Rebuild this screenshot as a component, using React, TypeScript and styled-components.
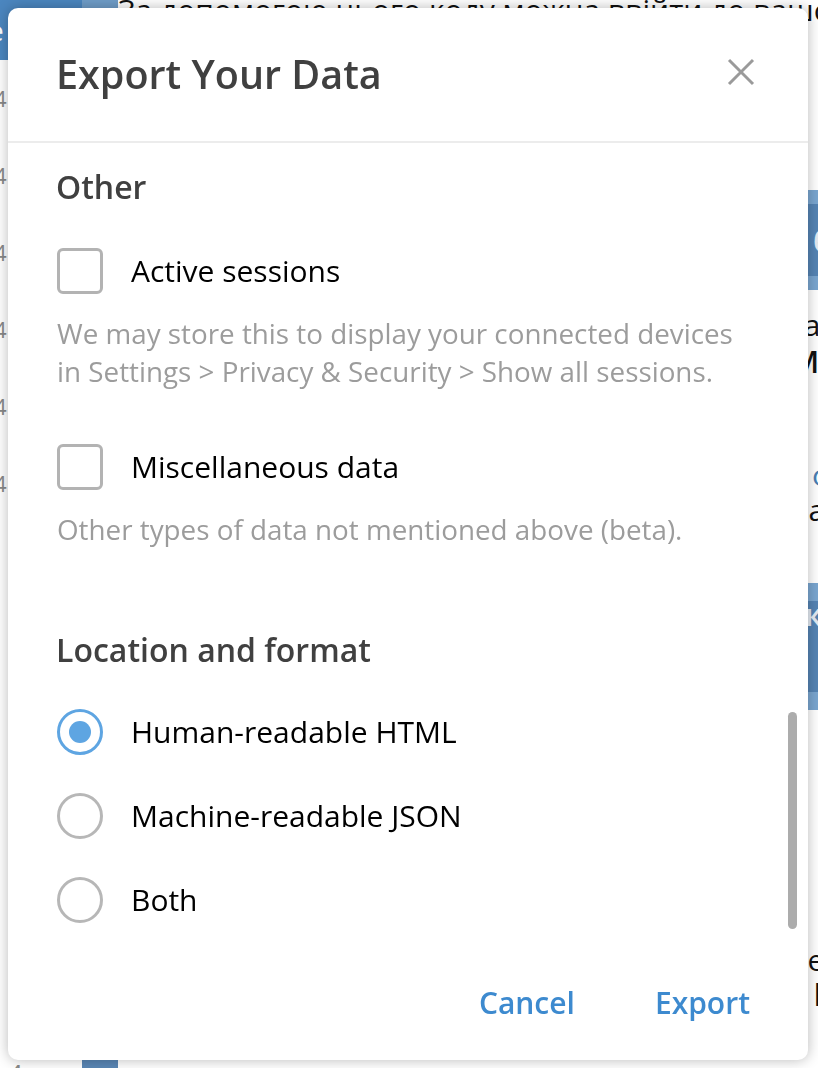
import styled, { createGlobalStyle } from 'styled-components';

const GlobalStyle = createGlobalStyle`
  html, body {
    margin: 0;
    padding: 0;
    background: #ffffff;
    overflow: hidden;
  }
  body {
    font-family: "Open Sans", "Noto Sans", sans-serif;
  }
`

const Backdrop = styled.div`
  width: 818px;
  height: 1068px;
  display: flex;
  overflow: hidden;
  background: #ffffff;
`

const Sidebar = styled.div`
  width: 118px;
  flex-shrink: 0;
  display: flex;
  flex-direction: column;
`

const SideTop = styled.div`
  height: 60px;
  display: flex;
`

const SideActive = styled.div`
  width: 82px;
  background: #4b86bf;
  color: #fff;
  font-size: 28px;
  line-height: 60px;
  overflow: hidden;
  text-indent: -12px;
`

const SideLight = styled.div`
  flex: 1;
  background: #6f9dc8;
`

const SideItem = styled.div`
  height: 77px;
  font-size: 22px;
  color: #888;
  line-height: 77px;
  text-indent: -6px;
  &:first-of-type {
    margin-top: 108px;
  }
`

const SideBottom = styled.div`
  margin-top: auto;
  display: flex;
  height: 8px;
  align-items: flex-start;
  overflow: hidden;
`

const SideBottomText = styled.div`
  width: 82px;
  font-size: 26px;
  color: #888;
  line-height: 26px;
  padding-left: 8px;
  box-sizing: border-box;
`

const SideBottomBlue = styled.div`
  flex: 1;
  height: 8px;
  background: #5a87b5;
`

const Chat = styled.div`
  flex: 1;
  display: flex;
  flex-direction: column;
`

const ChatLine = styled.div<{ $top: number; $bold?: boolean; $color?: string; $shift?: number }>`
  height: 36px;
  line-height: 36px;
  margin-top: ${(p) => p.$top}px;
  margin-right: ${(p) => -(p.$shift ?? 14)}px;
  font-size: 30px;
  font-weight: ${(p) => (p.$bold ? 600 : 400)};
  color: ${(p) => p.$color || '#111'};
  text-align: right;
  white-space: nowrap;
  overflow: hidden;
`

const ChatBlock = styled.div<{ $top: number; $h: number }>`
  height: ${(p) => p.$h}px;
  margin-top: ${(p) => p.$top}px;
  background: linear-gradient(#7aa6d0 0 14%, #5584b4 14% 86%, #7aa6d0 86%);
  color: rgba(255, 255, 255, 0.85);
  font-size: 30px;
  font-weight: 600;
  text-align: right;
  display: flex;
  flex-direction: column;
  justify-content: space-around;
  margin-right: -14px;
`

const Overlay = styled.div`
  position: fixed;
  inset: 0;
`

const Modal = styled.div`
  position: absolute;
  left: 8px;
  top: 8px;
  width: 800px;
  height: 1052px;
  background: #ffffff;
  border-radius: 10px;
  box-shadow: 0 0 14px rgba(0, 0, 0, 0.28);
  display: flex;
  flex-direction: column;
  overflow: hidden;
`

const Header = styled.div`
  height: 135px;
  flex-shrink: 0;
  display: flex;
  align-items: center;
  justify-content: space-between;
  padding: 0 52px 0 48px;
  box-sizing: border-box;
  border-bottom: 2px solid #ececec;
`

const Title = styled.div`
  font-size: 39.5px;
  font-weight: 600;
  color: #404040;
  margin-top: -2px;
`

const CloseButton = styled.button`
  border: none;
  background: none;
  padding: 0;
  width: 30px;
  height: 30px;
  cursor: pointer;
  display: flex;
  align-items: center;
  justify-content: center;
  margin-top: -5px;
`

const Body = styled.div`
  flex: 1;
  position: relative;
  padding: 24px 49px 0 48px;
  overflow: hidden;
`

const SectionTitle = styled.div<{ $top: number }>`
  font-size: 32px;
  font-weight: 600;
  color: #404040;
  line-height: 40px;
  margin-top: ${(p) => p.$top}px;
`

const OptionRow = styled.div<{ $top: number }>`
  display: flex;
  align-items: center;
  gap: 28px;
  height: 46px;
  margin-top: ${(p) => p.$top}px;
  padding-left: 1px;
`

const CheckBox = styled.div`
  width: 46px;
  height: 46px;
  box-sizing: border-box;
  border: 3px solid #b3b3b3;
  border-radius: 6px;
  flex-shrink: 0;
`

const Radio = styled.div<{ $checked?: boolean }>`
  width: 46px;
  height: 46px;
  box-sizing: border-box;
  border-radius: 50%;
  border: 3px solid ${(p) => (p.$checked ? '#5ea5e2' : '#b7b7b7')};
  flex-shrink: 0;
  display: flex;
  align-items: center;
  justify-content: center;
  &::after {
    content: '';
    width: 22px;
    height: 22px;
    border-radius: 50%;
    background: #5ea5e2;
    display: ${(p) => (p.$checked ? 'block' : 'none')};
  }
`

const Label = styled.div`
  font-size: 30px;
  color: #000;
  line-height: 40px;
`

const Description = styled.div`
  font-size: 27.8px;
  color: #9c9c9c;
  line-height: 38px;
  margin-top: 20px;
  padding-left: 1px;
`

const ScrollThumb = styled.div`
  position: absolute;
  right: 11px;
  top: 569px;
  width: 9px;
  height: 217px;
  border-radius: 5px;
  background: #acacac;
`

const Footer = styled.div`
  height: 112px;
  flex-shrink: 0;
  display: flex;
  justify-content: flex-end;
  align-items: center;
  gap: 80px;
  padding: 0 58px 4px 0;
  box-sizing: border-box;
`

const TextButton = styled.button`
  border: none;
  background: none;
  padding: 0;
  font-family: "Open Sans", "Noto Sans", sans-serif;
  font-size: 30px;
  font-weight: 600;
  color: #3d8acf;
  cursor: pointer;
`

const CloseIcon = () => (
  <svg width="28" height="28" viewBox="0 0 28 28">
    <path d="M2 2 L26 26 M26 2 L2 26" stroke="#9a9a9a" strokeWidth="3" />
  </svg>
)

const formats = ['Human-readable HTML', 'Machine-readable JSON', 'Both']

export default function App() {
  return <>
    <GlobalStyle />
    <Backdrop>
      <Sidebar>
        <SideTop>
          <SideActive>e</SideActive>
          <SideLight />
        </SideTop>
        {[0, 1, 2, 3, 4, 5].map((i) => <SideItem key={i}>4</SideItem>)}
        <SideBottom>
          <SideBottomText>4 ив</SideBottomText>
          <SideBottomBlue />
        </SideBottom>
      </Sidebar>
      <Chat>
        <ChatLine $top={-8}>За допомогою цього коду можна ввійти до вашої</ChatLine>
        <ChatLine $top={62}>р</ChatLine>
        <ChatLine $top={31}>н</ChatLine>
        <ChatBlock $top={-3} $h={100}><span>б,</span></ChatBlock>
        <ChatLine $top={17}>ан</ChatLine>
        <ChatLine $top={1} $bold>Ми</ChatLine>
        <ChatLine $top={77} $color="#4a7fb3" $shift={8}>ф</ChatLine>
        <ChatLine $top={-1}>ат</ChatLine>
        <ChatBlock $top={55} $h={127}><span>ка</span><span>а</span></ChatBlock>
        <ChatLine $top={117}>о</ChatLine>
        <ChatLine $top={79}>еу</ChatLine>
        <ChatLine $top={-1} $bold>le</ChatLine>
      </Chat>
    </Backdrop>
    <Overlay>
      <Modal>
        <Header>
          <Title>Export Your Data</Title>
          <CloseButton aria-label="Close"><CloseIcon /></CloseButton>
        </Header>
        <Body>
          <SectionTitle $top={0}>Other</SectionTitle>
          <OptionRow $top={41}>
            <CheckBox />
            <Label>Active sessions</Label>
          </OptionRow>
          <Description>
            We may store this to display your connected devices<br />
            in Settings &gt; Privacy &amp; Security &gt; Show all sessions.
          </Description>
          <OptionRow $top={54}>
            <CheckBox />
            <Label>Miscellaneous data</Label>
          </OptionRow>
          <Description>Other types of data not mentioned above (beta).</Description>
          <SectionTitle $top={82}>Location and format</SectionTitle>
          {formats.map((f, i) => (
            <OptionRow key={f} $top={i === 0 ? 39 : 38}>
              <Radio $checked={i === 0} />
              <Label>{f}</Label>
            </OptionRow>
          ))}
          <ScrollThumb />
        </Body>
        <Footer>
          <TextButton>Cancel</TextButton>
          <TextButton>Export</TextButton>
        </Footer>
      </Modal>
    </Overlay>
  </>
}
